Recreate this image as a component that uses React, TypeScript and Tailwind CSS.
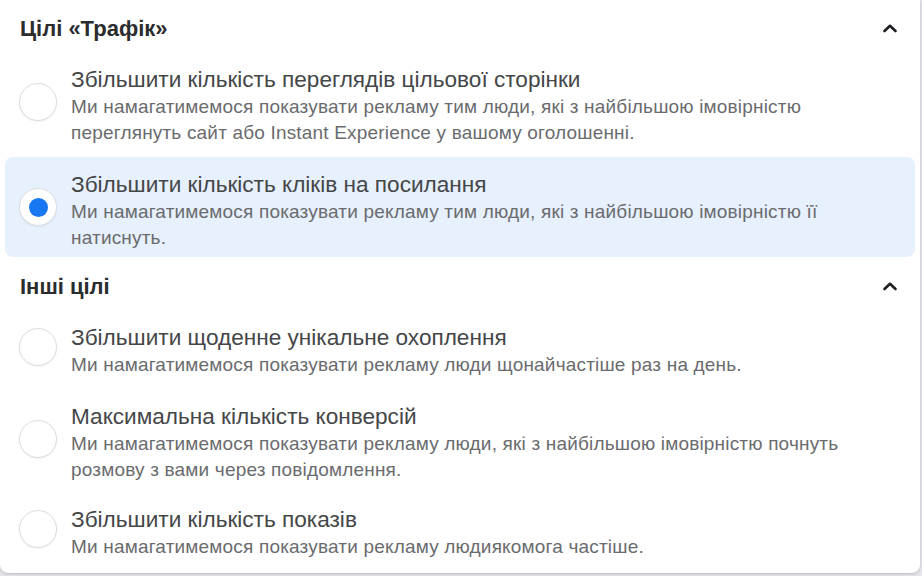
import React from 'react'

type Goal = {
  id: string
  title: string
  description: string
  selected?: boolean
}

const trafficGoals: Goal[] = [
  {
    id: 'landing',
    title: 'Збільшити кількість переглядів цільової сторінки',
    description:
      'Ми намагатимемося показувати рекламу тим люди, які з найбільшою імовірністю переглянуть сайт або Instant Experience у вашому оголошенні.',
  },
  {
    id: 'clicks',
    title: 'Збільшити кількість кліків на посилання',
    description:
      'Ми намагатимемося показувати рекламу тим люди, які з найбільшою імовірністю її натиснуть.',
    selected: true,
  },
]

const otherGoals: Goal[] = [
  {
    id: 'reach',
    title: 'Збільшити щоденне унікальне охоплення',
    description: 'Ми намагатимемося показувати рекламу люди щонайчастіше раз на день.',
  },
  {
    id: 'conversions',
    title: 'Максимальна кількість конверсій',
    description:
      'Ми намагатимемося показувати рекламу люди, які з найбільшою імовірністю почнуть розмову з вами через повідомлення.',
  },
  {
    id: 'impressions',
    title: 'Збільшити кількість показів',
    description: 'Ми намагатимемося показувати рекламу людиякомога частіше.',
  },
]

const ChevronUp = () => (
  <svg width="16" height="10" viewBox="0 0 16 10" fill="none">
    <path d="M2.5 8 L8 2.8 L13.5 8" stroke="#1c1e21" strokeWidth="2.6" strokeLinecap="round" strokeLinejoin="round" />
  </svg>
)

const Radio = ({ checked }: { checked?: boolean }) => (
  <div className="w-[38px] h-[38px] shrink-0 -mt-[8px] rounded-full bg-white border border-[#dadde1] shadow-[0_1px_2px_rgba(0,0,0,0.06)] flex items-center justify-center">
    {checked && <div className="w-[19px] h-[19px] rounded-full bg-[#1877f2]" />}
  </div>
)

const GoalRow = ({ goal, className }: { goal: Goal; className: string }) => (
  <div
    className={
      'mx-[5px] pl-[14px] pr-4 flex items-center gap-[14px] ' +
      (goal.selected ? 'bg-[#e7f0fd] rounded-lg ' : '') +
      className
    }
  >
    <Radio checked={goal.selected} />
    <div className="flex-1 max-w-[790px]">
      <div className="text-[22.6px] leading-[28px] text-[#444648]">{goal.title}</div>
      <div className="text-[19px] leading-[26px] tracking-[0.18px] text-[#6a6b6e]">{goal.description}</div>
    </div>
  </div>
)

const SectionHeader = ({ title, className }: { title: string; className: string }) => (
  <div className={'flex items-center justify-between pl-5 pr-[22px] ' + className}>
    <h2 className="text-[22px] font-bold text-[#2b2c2e]">{title}</h2>
    <ChevronUp />
  </div>
)

export default function App() {
  return (
    <div className="w-[922px] h-[576px] overflow-hidden bg-[#e4e6eb] font-['Liberation_Sans',sans-serif]">
      <div className="mr-[2px] h-[573px] bg-white rounded-b-lg shadow-[0_1px_3px_rgba(0,0,0,0.2)]">
        <SectionHeader title="Цілі «Трафік»" className="h-[56px]" />
        <GoalRow goal={trafficGoals[0]} className="pt-[10px] pb-[11px]" />
        <GoalRow goal={trafficGoals[1]} className="pt-[14px] pb-[6px]" />

        <SectionHeader title="Інші цілі" className="h-[58px]" />
        <GoalRow goal={otherGoals[0]} className="pt-[9px] pb-[12px]" />
        <GoalRow goal={otherGoals[1]} className="pt-[13px] pb-[11px]" />
        <GoalRow goal={otherGoals[2]} className="pt-[12px] pb-[13px]" />
      </div>
    </div>
  )
}
